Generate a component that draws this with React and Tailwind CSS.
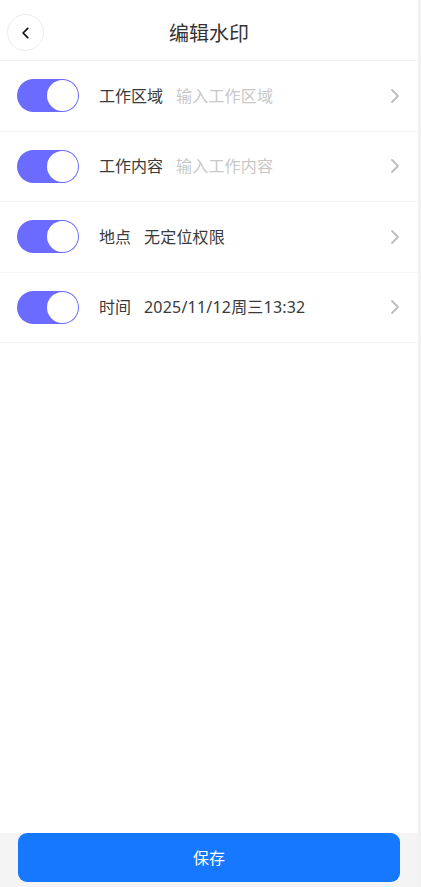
import React from "react";

const rows = [
  { label: "工作区域", value: "输入工作区域", placeholder: true },
  { label: "工作内容", value: "输入工作内容", placeholder: true },
  { label: "地点", value: "无定位权限", placeholder: false },
  { label: "时间", value: "2025/11/12周三13:32", placeholder: false },
];

function Toggle() {
  return (
    <div className="w-[62px] h-[33px] rounded-full bg-[#6b6bff] flex items-center justify-end pr-[1px]">
      <div className="w-[31px] h-[31px] rounded-full bg-white" />
    </div>
  );
}

export default function App() {
  return (
    <div
      className="w-[421px] h-[887px] flex bg-[#f1f1f1]"
      style={{ fontFamily: '"Noto Sans", "Noto Sans CJK SC", sans-serif' }}
    >
      <div className="w-[418px] flex flex-col">
        <div className="flex-1 bg-white flex flex-col">
          <div className="h-[61px] flex items-center relative border-b border-[#f2f2f2]">
            <div className="ml-[7px] mt-[5px] w-[37px] h-[37px] rounded-full border border-[#ececec] flex items-center justify-center">
              <svg width="14" height="14" viewBox="0 0 24 24" fill="none" stroke="#111" strokeWidth="3" strokeLinecap="round" strokeLinejoin="round">
                <path d="M15 4 L7 12 L15 20" />
              </svg>
            </div>
            <div className="absolute inset-0 pt-[8px] flex items-center justify-center text-[20px] text-[#333] pointer-events-none">
              编辑水印
            </div>
          </div>
          {rows.map((r, i) => (
            <div key={i} className="h-[70.5px] flex items-center border-b border-[#f4f4f4] pl-[17px] pr-[17px]">
              <Toggle />
              <span className="ml-[20px] text-[16px] text-[#3a3a3a]">{r.label}</span>
              <span className={"ml-[13px] text-[16px] tracking-[0.2px] " + (r.placeholder ? "text-[#c8c8c8]" : "text-[#3a3a3a]")}>{r.value}</span>
              <div className="flex-1" />
              <svg width="12" height="18" viewBox="0 0 12 18" fill="none" stroke="#bdbdbd" strokeWidth="1.8" strokeLinecap="round" strokeLinejoin="round">
                <path d="M3 3 L9 9 L3 15" />
              </svg>
            </div>
          ))}
        </div>
        <div className="h-[54px] bg-[#f4f4f4] px-[18px] pb-[5px]">
          <button className="w-full h-[49px] rounded-[9px] bg-[#1677ff] text-white text-[16px]">保存</button>
        </div>
      </div>
    </div>
  );
}
